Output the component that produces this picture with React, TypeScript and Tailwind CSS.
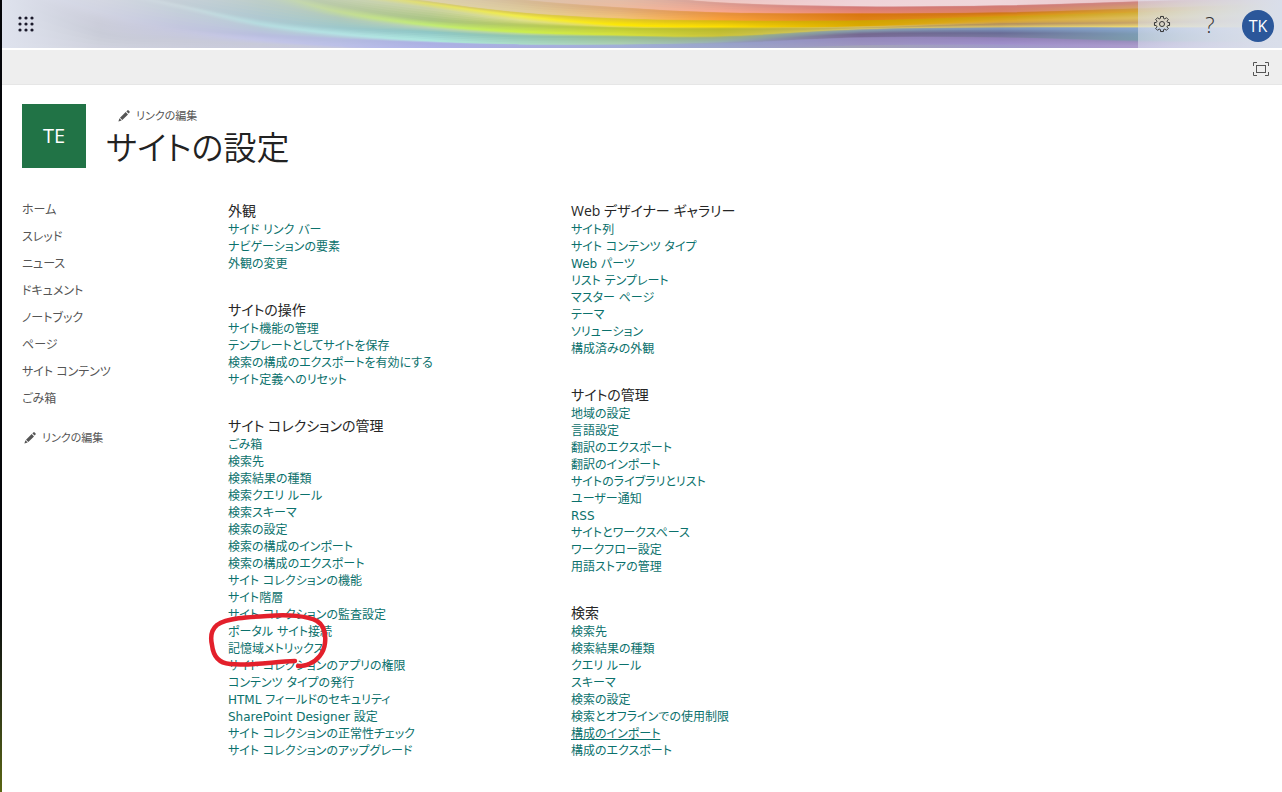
import { useId } from "react";

type Section = { title: string; links: string[] };

const NAV_ITEMS = [
  "ホーム",
  "スレッド",
  "ニュース",
  "ドキュメント",
  "ノートブック",
  "ページ",
  "サイト コンテンツ",
  "ごみ箱",
];

const LEFT_SECTIONS: Section[] = [
  { title: "外観", links: ["サイド リンク バー", "ナビゲーションの要素", "外観の変更"] },
  {
    title: "サイトの操作",
    links: [
      "サイト機能の管理",
      "テンプレートとしてサイトを保存",
      "検索の構成のエクスポートを有効にする",
      "サイト定義へのリセット",
    ],
  },
  {
    title: "サイト コレクションの管理",
    links: [
      "ごみ箱",
      "検索先",
      "検索結果の種類",
      "検索クエリ ルール",
      "検索スキーマ",
      "検索の設定",
      "検索の構成のインポート",
      "検索の構成のエクスポート",
      "サイト コレクションの機能",
      "サイト階層",
      "サイト コレクションの監査設定",
      "ポータル サイト接続",
      "記憶域メトリックス",
      "サイト コレクションのアプリの権限",
      "コンテンツ タイプの発行",
      "HTML フィールドのセキュリティ",
      "SharePoint Designer 設定",
      "サイト コレクションの正常性チェック",
      "サイト コレクションのアップグレード",
    ],
  },
];

const RIGHT_SECTIONS: Section[] = [
  {
    title: "Web デザイナー ギャラリー",
    links: [
      "サイト列",
      "サイト コンテンツ タイプ",
      "Web パーツ",
      "リスト テンプレート",
      "マスター ページ",
      "テーマ",
      "ソリューション",
      "構成済みの外観",
    ],
  },
  {
    title: "サイトの管理",
    links: [
      "地域の設定",
      "言語設定",
      "翻訳のエクスポート",
      "翻訳のインポート",
      "サイトのライブラリとリスト",
      "ユーザー通知",
      "RSS",
      "サイトとワークスペース",
      "ワークフロー設定",
      "用語ストアの管理",
    ],
  },
  {
    title: "検索",
    links: [
      "検索先",
      "検索結果の種類",
      "クエリ ルール",
      "スキーマ",
      "検索の設定",
      "検索とオフラインでの使用制限",
      "構成のインポート",
      "構成のエクスポート",
    ],
  },
];

// Banner ribbons: each edge has a height and a colour at every x in RIBBON_X.
const RIBBON_X = [0, 100, 180, 260, 340, 430, 520, 620, 720, 860, 1000, 1138, 1282];

const EDGES: { y: number[]; c: string }[] = [
  { y: [0, 0, 0, 0, 0, 0, 0, 0, 0, 0, 0, 0, 0], c: "dfe3ee d5d8e2 d2d5df d3d7e0 d2d6dd d5d8df d4c0b0 e6c4b4 ecc6c4 efd3d8 efd6da e9c4c8 e6d2d8" },
  { y: [-100, -90, -80, -70, -55, -40, -24, -8, 2, 6, 5, 1, -4], c: "dfe3ee d5d8e2 d2d5df d3d7e0 d2d6dd d5d8df ddc8b8 e8c4b4 f0c8c2 f0d4d8 efd6da e9c4c8 e6d2d8" },
  { y: [-100, -90, -80, -70, -55, -40, -24, -8, 3, 7, 6, 2, -3], c: "dfe3ee d5d8e2 d2d5df d3d7e0 d2d6dd d5d8df ddc8b8 d8bcae d99b91 d27878 d17a76 cd8480 e0b8b0" },
  { y: [-90, -80, -70, -60, -38, -14, -1, 7, 12, 13, 12, 8, 3], c: "dfe3ee d5d8e2 d2d5df d3d7e0 d2d6dd d5cfc7 dac3ac ecbca0 f9a88f e88870 da8368 d5a06a e8cfa0" },
  { y: [-89, -79, -69, -59, -37, -13, 0, 8, 13, 14, 13, 9, 4], c: "dfe3ee d5d8e2 d2d5df d3d7e0 d2d6dd d2c9bb d5ba96 dda878 e6923e d8760e cf7318 cf9a3c e6d2a0" },
  { y: [-88, -70, -50, -36, -13, 1, 12, 18, 20, 20, 16, 12, 8], c: "dfe3ee d5d8e2 d2d5df d3d7e0 d2d6cc ddd2ab e0cf9e f2c478 fba03a e08018 dc9210 d8a630 e6dca8" },
  { y: [-87, -69, -49, -35, -12, 2, 13, 19, 21, 21, 17, 13, 9], c: "dfe3ee d5d8e2 d2d5df d3d7e0 cfd3b8 d5cc78 dac94e dfc62c d8b810 d0a400 cf9c10 d2ae38 e4dda8" },
  { y: [-80, -66, -46, -32, -9, 4, 16, 25, 27, 26, 21, 18, 15], c: "dfe3ee d5d8e2 d2d5df d3d7e0 d4d8b0 e3e06a f3ee48 ffe900 ffe000 dca800 dca82c dcbf60 e6e2bc" },
  { y: [-76, -60, -40, -25, -4, 8, 20, 27, 28, 27, 23, 21, 18], c: "dfe3ee d5d8e2 d2d5df cfd5d8 c9d3b8 cdd4a4 dfe08c e4dc4c d8c820 d8c060 cda048 d0ac60 e6e0c0" },
  { y: [-70, -45, -30, -14, 6, 20, 25, 28, 29, 28, 24, 23, 20], c: "dfe3ee d5d8e2 cfd4dc c0cdc4 b8c9a4 a8c482 b4c860 bcc834 b8b82c c4b060 b08c5c c8a468 e4dcc4" },
  { y: [-62, -38, -22, -9, 12, 25, 32, 35, 36, 29, 27, 27, 27], c: "dfe3ee d5d8e2 d0d6dc c4d2c4 c4dc98 c3ee72 ccf04c d8e23c ccc43c d4c468 dcc468 f0e078 e8e6c8" },
  { y: [-60, -30, -12, 1, 18, 28, 34, 36, 37, 30, 28, 28, 28], c: "dfe3ee d5d8e2 cdd4dc bdcdc8 b0c9bb b8d4b4 b4d4a0 b4cc70 a4b470 94a0a0 8498b4 8ca4cc d4dcec" },
  { y: [-30, -14, 3, 19, 28, 32, 36, 37, 38, 31, 29, 29, 29], c: "dfe3ee d5d8e2 c3ced6 aec9d2 9cc8cc 8cc4c4 90c4ac 94bc90 98b088 8498ac 7c94bc 88a4cc d4dcec" },
  { y: [-26, -10, 6, 24, 34, 41, 44, 44, 42, 34, 33, 34, 36], c: "dfe3ee d5d8e2 cbd8de b6dde0 b4e4e4 b0eae0 acdcc8 acd0b4 98b0b4 74688f 686a94 7c9cb4 d2daea" },
  { y: [-24, -6, 10, 28, 37, 42, 45, 45, 43, 37, 37, 40, 41], c: "dfe3ee d5d8e2 c4d0d9 b8c9d8 b4ccdc b0c8e4 a8bcdc a4b8cc 98a4bc 7a6c98 7a7aa0 7c9cac d2d8e8" },
  { y: [-20, 12, 28, 35, 39, 43, 45, 45, 44, 38, 38, 42, 43], c: "dfe3ee d1d4e2 c3c6de b9bedf b4bce0 acb0e4 a8b0e0 a0b0d8 98a4cc 9488bc 9080b8 9c90c0 d4d4e8" },
  { y: [-14, 20, 31, 40, 46, 49, 49, 49, 49, 45, 44, 46, 47], c: "dfe3ee cccedb c6c8e0 c4c6e8 bcc0e8 b0b4e8 a8acdc a4acd4 a0a8c8 9c94c0 a090cc ac9ccc d4d4e8" },
  { y: [-5, 34, 40, 44, 48, 51, 51, 51, 51, 46, 46, 49, 50], c: "dfe3ee c9ccd8 c8cad9 c8cada c6c8dc b0b4e8 a8acdc a4acd4 a0a8c0 a4a4b8 a09cc8 ac9ccc d4d4e8" },
  { y: [52, 52, 52, 52, 52, 52, 52, 52, 52, 52, 52, 52, 52], c: "dfe3ee d3d5e0 cdcfdd cacbdc c6c8dc b0b4e8 a8acdc a4acd4 a0a8c0 a8a8b8 a49ccc ac9ccc d4d4e8" },
];

const STEPS = 5;

function mix(a: string, b: string, t: number) {
  const part = (i: number) => {
    const from = parseInt(a.slice(i, i + 2), 16);
    const to = parseInt(b.slice(i, i + 2), 16);
    return Math.round(from + (to - from) * t);
  };
  return `rgb(${part(0)},${part(2)},${part(4)})`;
}

// Smooth curve through the given heights
function curve(ys: number[], reverse = false) {
  const pts = RIBBON_X.map((x, i) => [x, ys[i]]);
  if (reverse) pts.reverse();
  let d = `${pts[0][0]} ${pts[0][1]}`;
  for (let i = 0; i < pts.length - 1; i++) {
    const p0 = pts[Math.max(i - 1, 0)];
    const p1 = pts[i];
    const p2 = pts[i + 1];
    const p3 = pts[Math.min(i + 2, pts.length - 1)];
    d += ` C${p1[0] + (p2[0] - p0[0]) / 6} ${p1[1] + (p2[1] - p0[1]) / 6}`;
    d += ` ${p2[0] - (p3[0] - p1[0]) / 6} ${p2[1] - (p3[1] - p1[1]) / 6} ${p2[0]} ${p2[1]}`;
  }
  return d;
}

function buildRibbons() {
  const ribbons: { d: string; colors: string[] }[] = [];
  for (let k = 0; k < EDGES.length - 1; k++) {
    const top = EDGES[k];
    const bottom = EDGES[k + 1];
    const topColors = top.c.split(" ");
    const bottomColors = bottom.c.split(" ");
    for (let s = 0; s < STEPS; s++) {
      const upper = top.y.map((y, i) => y + ((bottom.y[i] - y) * s) / STEPS);
      // run a little past the next edge so no seam shows
      const lower = top.y.map((y, i) => y + ((bottom.y[i] - y) * (s + 1)) / STEPS + 1);
      ribbons.push({
        d: `M${curve(upper)} L${curve(lower, true)} Z`,
        colors: topColors.map((c, i) => mix(c, bottomColors[i], (s + 0.5) / STEPS)),
      });
    }
  }
  return ribbons;
}

const RIBBONS = buildRibbons();

function BannerArt() {
  const id = useId();
  return (
    <svg
      className="absolute inset-0 h-full w-full"
      viewBox="2 0 1280 48"
      preserveAspectRatio="none"
      aria-hidden="true"
    >
      <defs>
        {RIBBONS.map((r, i) => (
          <linearGradient key={i} id={`${id}r${i}`} gradientUnits="userSpaceOnUse" x1="0" x2="1282" y1="0" y2="0">
            {r.colors.map((c, j) => (
              <stop key={j} offset={RIBBON_X[j] / 1282} stopColor={c} />
            ))}
          </linearGradient>
        ))}
        <linearGradient id={`${id}fade`}>
          <stop offset="0" stopColor="#dce2f0" stopOpacity="0.6" />
          <stop offset="0.7" stopColor="#d9deea" stopOpacity="0.85" />
          <stop offset="1" stopColor="#d9deea" />
        </linearGradient>
      </defs>
      <rect width="1282" height="48" fill="#d4d7e0" />
      {RIBBONS.map((r, i) => (
        <path key={i} d={r.d} fill={`url(#${id}r${i})`} />
      ))}
      <rect x="1138" width="144" height="48" fill={`url(#${id}fade)`} />
    </svg>
  );
}

function WaffleIcon() {
  const dots = [2, 8, 14];
  return (
    <svg width="16" height="16" viewBox="0 0 16 16" fill="#1b1a2b" aria-hidden="true">
      {dots.map((y) => dots.map((x) => <circle key={`${x}-${y}`} cx={x} cy={y} r="1.6" />))}
    </svg>
  );
}

function gearPath() {
  let d = "";
  for (let i = 0; i < 8; i++) {
    const at = (deg: number, r: number) => {
      const a = ((i * 45 + deg) * Math.PI) / 180;
      return `${(9 + r * Math.cos(a)).toFixed(2)} ${(9 + r * Math.sin(a)).toFixed(2)}`;
    };
    d += `${i ? "L" : "M"}${at(-11, 7.7)} L${at(11, 7.7)} L${at(14, 6)} Q${at(22.5, 5.2)} ${at(31, 6)}`;
  }
  return d + "Z";
}

function GearIcon() {
  return (
    <svg width="18" height="18" viewBox="0 0 18 18" fill="none" stroke="#333" aria-hidden="true">
      <path d={gearPath()} strokeLinejoin="round" />
      <circle cx="9" cy="9" r="2.5" />
    </svg>
  );
}

function FocusIcon() {
  return (
    <svg width="16" height="14" viewBox="0 0 16 14" fill="none" stroke="#555" aria-hidden="true">
      <path d="M0.5 4V0.5H4M12 0.5h3.5V4M15.5 10v3.5H12M4 13.5H0.5V10" />
      <rect x="3.5" y="3.5" width="9" height="7" />
    </svg>
  );
}

function PencilIcon() {
  return (
    <svg width="12" height="12" viewBox="0 0 12 12" fill="#555" aria-hidden="true">
      <path d="M0.4 11.6l1-3.3 2.3 2.3zM2 7.7l5.7-5.6 2.3 2.3-5.7 5.6zM8.4 1.4l.8-.8c.5-.5 1.1-.4 1.5 0l.7.7c.4.4.5 1 0 1.5l-.8.8z" />
    </svg>
  );
}

function EditLinks() {
  return (
    <button type="button" className="flex h-4 items-center gap-1.5 text-[11px] text-[#555]">
      <PencilIcon />
      リンクの編集
    </button>
  );
}

// Hand-drawn ring round the two storage related links
function MarkerRing() {
  return (
    <svg
      className="pointer-events-none absolute -left-5 top-[194px]"
      width="126"
      height="62"
      viewBox="208 610 126 62"
      fill="none"
      stroke="#e3202b"
      strokeWidth="4.5"
      strokeLinecap="round"
      strokeLinejoin="round"
      aria-hidden="true"
    >
      <path d="M295 661C272 662 250 666 230 664C217 663 213 654 212 645C210 636 211 630 217 625C227 618 248 617 268 616C287 614 308 616 317 621C325 626 326 634 325 643C324 653 317 661 309 664C305 666 301 666 298 666" />
    </svg>
  );
}

function SettingsSection({ section }: { section: Section }) {
  return (
    <section className="relative">
      <h2 className="mb-0.5 text-sm leading-[19px] text-[#262626]">{section.title}</h2>
      <ul className="font-['DejaVu_Sans','Noto_Sans_CJK_JP',sans-serif] text-xs text-[#0b716c]">
        {section.links.map((label) => (
          <li key={label} className="h-[17px] whitespace-nowrap leading-[17px]">
            <a href="#" className={label === "構成のインポート" ? "underline" : "hover:underline"}>
              {label}
            </a>
          </li>
        ))}
      </ul>
      {section.links.includes("記憶域メトリックス") && <MarkerRing />}
    </section>
  );
}

export default function App() {
  return (
    <div className="flex min-h-screen bg-white font-['Open_Sans','Noto_Sans_CJK_JP',sans-serif] [font-feature-settings:'palt']">
      <div className="w-0.5 shrink-0 bg-linear-to-b from-[#05060a] from-75% to-[#5a6612]" />
      <div className="min-w-0 flex-1">
        {/* Suite bar */}
        <header className="relative h-12 overflow-hidden">
          <BannerArt />
          <div className="relative flex h-full items-center justify-between pl-4 pr-2">
            <button type="button" aria-label="アプリ起動ツール">
              <WaffleIcon />
            </button>
            <div className="flex h-full items-center">
              <button type="button" aria-label="設定" className="flex w-12 justify-center">
                <GearIcon />
              </button>
              <button type="button" aria-label="ヘルプ" className="w-12 text-[22px] font-light text-[#333]">
                ?
              </button>
              <button
                type="button"
                className="ml-2 mt-1 flex size-8 items-center justify-center rounded-full bg-[#2b579a] text-base text-white"
              >
                TK
              </button>
            </div>
          </div>
        </header>

        {/* Ribbon row */}
        <div className="mt-0.5 flex h-[35px] items-center justify-end border-b border-[#e6e6e6] bg-[#eee] pl-3 pr-[13px] pt-1">
          <button type="button" aria-label="コンテンツにフォーカス">
            <FocusIcon />
          </button>
        </div>

        <div className="flex gap-5 px-5 pt-[19px]">
          <a href="#" className="flex size-16 items-center justify-center bg-[#217346] text-xl text-white">
            TE
          </a>
          <div>
            <div className="flex h-6 items-center pl-3">
              <EditLinks />
            </div>
            <h1 className="text-[33px] font-[350] leading-10 text-[#222]">サイトの設定</h1>
          </div>
        </div>

        <div className="flex px-5 pb-8 pt-7">
          <nav className="w-[206px] shrink-0 text-xs text-[#555]">
            <ul>
              {NAV_ITEMS.map((item) => (
                <li key={item} className="leading-[27px]">
                  <a href="#">{item}</a>
                </li>
              ))}
            </ul>
            <div className="mt-[18px] pl-0.5">
              <EditLinks />
            </div>
          </nav>

          <main className="grid flex-1 grid-cols-[343px_1fr] pt-[5px]">
            <div className="flex flex-col gap-[27px]">
              {LEFT_SECTIONS.map((s) => (
                <SettingsSection key={s.title} section={s} />
              ))}
            </div>
            <div className="flex flex-col gap-[27px]">
              {RIGHT_SECTIONS.map((s) => (
                <SettingsSection key={s.title} section={s} />
              ))}
            </div>
          </main>
        </div>
      </div>
    </div>
  );
}
